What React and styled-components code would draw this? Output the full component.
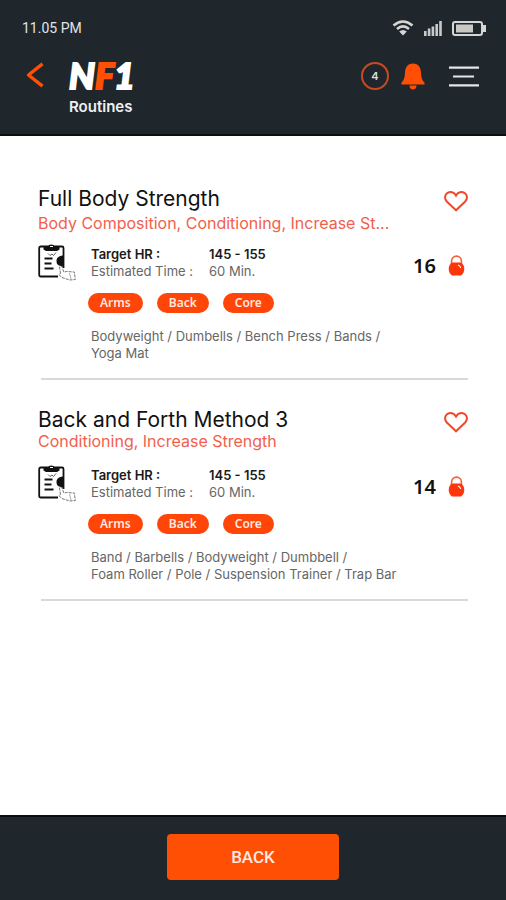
import React, { useState } from "react";
import styled, { createGlobalStyle } from "styled-components";

const routines = [
  {
    title: "Full Body Strength",
    goals: "Body Composition, Conditioning, Increase St...",
    count: 16,
    equipment: ["Bodyweight / Dumbells / Bench Press / Bands /", "Yoga Mat"],
  },
  {
    title: "Back and Forth Method 3",
    goals: "Conditioning, Increase Strength",
    count: 14,
    tight: true,
    equipment: [
      "Band / Barbells / Bodyweight / Dumbbell /",
      "Foam Roller / Pole / Suspension Trainer / Trap Bar",
    ],
  },
];

const tags = ["Arms", "Back", "Core"];

const WifiIcon = () => (
  <svg width="22" height="18" viewBox="0 0 22 18" fill="none" stroke="#d6d6d4" strokeWidth="2.6">
    <path d="M1.5 6.5Q11 -1.5 20.5 6.5" />
    <path d="M5 10Q11 4.800 17 10" />
    <path d="M11 16.500 7.200 12.600Q11 9.500 14.800 12.600Z" fill="#d6d6d4" stroke="none" />
  </svg>
);

const SignalIcon = () => (
  <svg width="18" height="15" viewBox="0 0 18 15" fill="#c9c9c7">
    <rect x="0" y="10" width="2.600" height="5" />
    <rect x="3.800" y="7.500" width="2.600" height="7.500" />
    <rect x="7.600" y="5.500" width="2.600" height="9.500" />
    <rect x="11.400" y="3" width="2.600" height="12" />
    <rect x="15.200" y="0" width="2.600" height="15" />
  </svg>
);

const BatteryIcon = () => (
  <svg width="34" height="15" viewBox="0 0 34 15">
    <rect x="1" y="1" width="29" height="13" rx="2" fill="none" stroke="#d6d6d4" strokeWidth="2" />
    <rect x="4" y="3.500" width="17" height="8" fill="#c9c9c3" />
    <path d="M31 4h3v7h-3z" fill="#d6d6d4" />
  </svg>
);

const ChevronIcon = () => (
  <svg width="18" height="26" viewBox="0 0 18 26" fill="none" stroke="#ff4f04" strokeWidth="3.400">
    <path d="M16.500 1.800 2.500 13l14 11.200" strokeLinejoin="round" />
  </svg>
);

const BellIcon = () => (
  <svg width="24" height="27" viewBox="0 0 24 27" fill="#ff4f04">
    <path d="M12 0.500C6.500 0.500 4.200 4.500 4 9.500C3.800 15 2.800 17.500 0.500 19.500V21.500H23.500V19.500C21.200 17.500 20.200 15 20 9.500C19.800 4.500 17.500 0.500 12 0.500Z" />
    <path d="M8.500 22.500h7c0 2.500-1.500 4-3.500 4s-3.500-1.500-3.500-4z" />
  </svg>
);

const MenuIcon = () => (
  <svg width="30" height="21" viewBox="0 0 30 21" stroke="#e4e6e6" strokeWidth="2.200">
    <path d="M0 1.600h30M4 10.500h21M0 19.400h30" />
  </svg>
);

const HeartIcon = () => (
  <svg width="24" height="21" viewBox="0 0 24 21" fill="none" stroke="#ee4a2c" strokeWidth="2">
    <path d="M12 19.300 2.800 10.500C0 7.200 0.800 3.600 3.500 1.900C6.500 0.300 10 1 12 4.600C14 1 17.500 0.300 20.500 1.900C23.200 3.600 24 7.200 21.200 10.500Z" />
  </svg>
);

const KettlebellIcon = () => (
  <svg width="17" height="21" viewBox="0 0 17 21">
    <path d="M3.600 9V6a4.900 4.900 0 0 1 9.800 0v3" fill="none" stroke="#f4603c" strokeWidth="1.600" />
    <path d="M4.500 7.500h8c2.500 1.200 3.800 3.300 3.800 6.200 0 3-1.200 5.200-3.300 6.800H4C1.900 18.900 0.700 16.700 0.700 13.700c0-2.900 1.300-5 3.800-6.200z" fill="#ff3408" />
    <path d="M10 10q2.300.8 2.700 3" fill="none" stroke="#fff" strokeWidth="1.100" />
  </svg>
);

const ClipboardIcon = () => (
  <svg width="38" height="37" viewBox="0 0 38 37" fill="none" stroke="#111">
    <path d="M20 32.500H2.800Q1.200 32.500 1.200 31V4Q1.200 2.500 2.800 2.500H24Q25.500 2.500 25.500 4V24" strokeWidth="1.800" />
    <path d="M5.500 2.500h4.500q.5-2 3.300-2t3.300 2h4.900V5.500L19 7H8L5.500 5.500z" fill="#111" stroke="none" />
    <path d="M12 2.500h3" stroke="#fff" strokeWidth="1" />
    <path d="M10 9.500l2 2 2-1.500 1.500 1.500 2.500-3" strokeWidth="0.900" stroke="#555" />
    <path d="M6.500 14.500h8M6.500 19.500h7M6.500 24.500h9" strokeWidth="2.200" />
    <path d="M26 11.500c-4 0-7.500 1.500-7.500 5.500s2.500 4.500 4 5l3.500 1z" fill="#111" stroke="none" />
    <path d="M22.500 29.500 21.500 23q1-2 2.500 0l1.800 5 3-.5 7.500.5 1 7.500-5.500.500-8-2.500-3-3z" fill="#fff" stroke="#777" strokeWidth="1" strokeDasharray="3 1" />
    <path d="M31.500 29l1.500 6" stroke="#999" strokeWidth="0.800" />
  </svg>
);

const RoutineCard = ({ routine }) => {
  const [liked, setLiked] = useState(false);
  return (
    <Card>
      <CardHead>
        <Heading>
          <Title>{routine.title}</Title>
          <Goals $tight={routine.tight}>{routine.goals}</Goals>
        </Heading>
        <LikeButton
          aria-label={`Like ${routine.title}`}
          aria-pressed={liked}
          onClick={() => setLiked(!liked)}
        >
          <HeartIcon />
        </LikeButton>
      </CardHead>
      <CardBody>
        <ClipboardIcon />
        <Facts>
          <Label $strong>Target HR :</Label>
          <Value $strong>145 - 155</Value>
          <Label>Estimated Time :</Label>
          <Value>60 Min.</Value>
        </Facts>
        <Count>
          {routine.count}
          <KettlebellIcon />
        </Count>
      </CardBody>
      <Tags>
        {tags.map((tag) => (
          <Tag key={tag}>{tag}</Tag>
        ))}
      </Tags>
      <Equipment>
        {routine.equipment.map((line) => (
          <span key={line}>{line}</span>
        ))}
      </Equipment>
      <Divider />
    </Card>
  );
};

const App = () => {
  return (
    <Page>
      <GlobalStyle />
      <Header>
        <StatusBar>
          <Time>11.05 PM</Time>
          <WifiIcon />
          <SignalIcon />
          <BatteryIcon />
        </StatusBar>
        <NavBar>
          <IconButton aria-label="Go back">
            <ChevronIcon />
          </IconButton>
          <Brand>
            <Logo>
              N<span>F</span>1
            </Logo>
            <PageName>Routines</PageName>
          </Brand>
          <Actions>
            <Badge>4</Badge>
            <IconButton aria-label="Notifications">
              <BellIcon />
            </IconButton>
            <MenuButton aria-label="Menu">
              <MenuIcon />
            </MenuButton>
          </Actions>
        </NavBar>
      </Header>
      <Main>
        {routines.map((routine) => (
          <RoutineCard key={routine.title} routine={routine} />
        ))}
      </Main>
      <Footer>
        <BackButton>BACK</BackButton>
      </Footer>
    </Page>
  );
};

// ------------------STYLED COMPONENTS ---------------------

const GlobalStyle = createGlobalStyle`
  * {
    margin: 0;
    padding: 0;
    box-sizing: border-box;
  }
  body {
    background: white;
    font-family: Inter, "Liberation Sans", sans-serif;
  }
  svg {
    display: block;
    flex-shrink: 0;
  }
`;

const Page = styled.div`
  min-height: 100vh;
  display: flex;
  flex-direction: column;
`;

const Header = styled.header`
  background: #1f272d;
  border-bottom: 2px solid #0a0e12;
  padding: 18px 20px 17px 22px;
`;

const StatusBar = styled.div`
  display: flex;
  align-items: center;
  gap: 10px;
  height: 20px;
`;

const Time = styled.span`
  flex: 1;
  color: #e2e5e6;
  font-family: Roboto, sans-serif;
  font-size: 14px;
  font-weight: 400;
`;

const NavBar = styled.div`
  display: flex;
  align-items: flex-start;
  padding: 24px 7px 0 4px;
`;

const IconButton = styled.button`
  border: none;
  background: none;
  cursor: pointer;
`;

const Brand = styled.div`
  flex: 1;
  padding-left: 25px;
`;

const Logo = styled.div`
  color: white;
  font-family: Lato, sans-serif;
  font-size: 36px;
  font-weight: 900;
  font-style: italic;
  line-height: 26px;
  -webkit-text-stroke: 2px white;
  span {
    color: #ff4f04;
    -webkit-text-stroke-color: #ff4f04;
  }
`;

const PageName = styled.h1`
  color: #eef0f1;
  font-size: 15px;
  font-weight: 600;
  line-height: 20px;
  padding-top: 9px;
`;

const Actions = styled.div`
  display: flex;
  align-items: center;
  gap: 12px;
`;

const Badge = styled.span`
  display: flex;
  align-items: center;
  justify-content: center;
  width: 28px;
  height: 28px;
  border: 2px solid #c94a22;
  border-radius: 50%;
  color: #d9dcdd;
  font-size: 11px;
  font-weight: 600;
`;

const MenuButton = styled(IconButton)`
  padding-left: 12px;
`;

const Main = styled.main`
  flex: 1;
  padding: 49px 38px 0;
`;

const Card = styled.article`
  padding-bottom: 26px;
`;

const CardHead = styled.div`
  display: flex;
  align-items: flex-start;
  justify-content: space-between;
`;

const LikeButton = styled(IconButton)`
  padding-top: 6px;
`;

const Heading = styled.div`
  display: flex;
  flex-direction: column;
  height: 59px;
`;

const Title = styled.h2`
  color: #111;
  font-size: 21px;
  font-weight: 400;
  line-height: 28px;
`;

const Goals = styled.p`
  color: #f2604c;
  font-size: 16px;
  line-height: ${({ $tight }) => ($tight ? "14px" : "20px")};
`;

const CardBody = styled.div`
  display: flex;
  align-items: center;
  padding-right: 3px;
`;

const Facts = styled.dl`
  flex: 1;
  display: grid;
  grid-template-columns: 118px 1fr;
  padding-left: 15px;
  font-size: 13px;
  line-height: 17px;
`;

const Label = styled.dt`
  color: ${({ $strong }) => ($strong ? "#1a1a1a" : "#666")};
  font-weight: ${({ $strong }) => ($strong ? 600 : 400)};
`;

const Value = styled.dd`
  color: ${({ $strong }) => ($strong ? "#1a1a1a" : "#666")};
  font-weight: ${({ $strong }) => ($strong ? 600 : 400)};
`;

const Count = styled.div`
  display: flex;
  align-items: center;
  gap: 12px;
  padding-top: 6px;
  color: #111;
  font-family: "Noto Sans", sans-serif;
  font-size: 20px;
  font-weight: 600;
  line-height: 24px;
`;

const Tags = styled.div`
  display: flex;
  gap: 14px;
  padding: 12px 0 0 50px;
`;

const Tag = styled.span`
  padding: 0 12px;
  border-radius: 10px;
  background: #ff4508;
  color: #ffe9e0;
  font-family: "Noto Sans", sans-serif;
  font-size: 12px;
  font-weight: 600;
  line-height: 20px;
`;

const Equipment = styled.p`
  display: flex;
  flex-direction: column;
  padding: 15px 0 16px 53px;
  color: #666;
  font-size: 13px;
  line-height: 17px;
`;

const Divider = styled.hr`
  margin-left: 3px;
  border: none;
  border-top: 2px solid #d9d9d9;
`;

const Footer = styled.footer`
  display: flex;
  justify-content: center;
  padding: 17px 0 20px;
  border-top: 2px solid #0a0e12;
  background: #1f272d;
`;

const BackButton = styled.button`
  width: 34%;
  height: 46px;
  border: none;
  border-radius: 4px;
  background: #ff4f04;
  color: #ffe9e0;
  font-family: Roboto, sans-serif;
  font-size: 17px;
  font-weight: 500;
  cursor: pointer;
`;

export default App;
